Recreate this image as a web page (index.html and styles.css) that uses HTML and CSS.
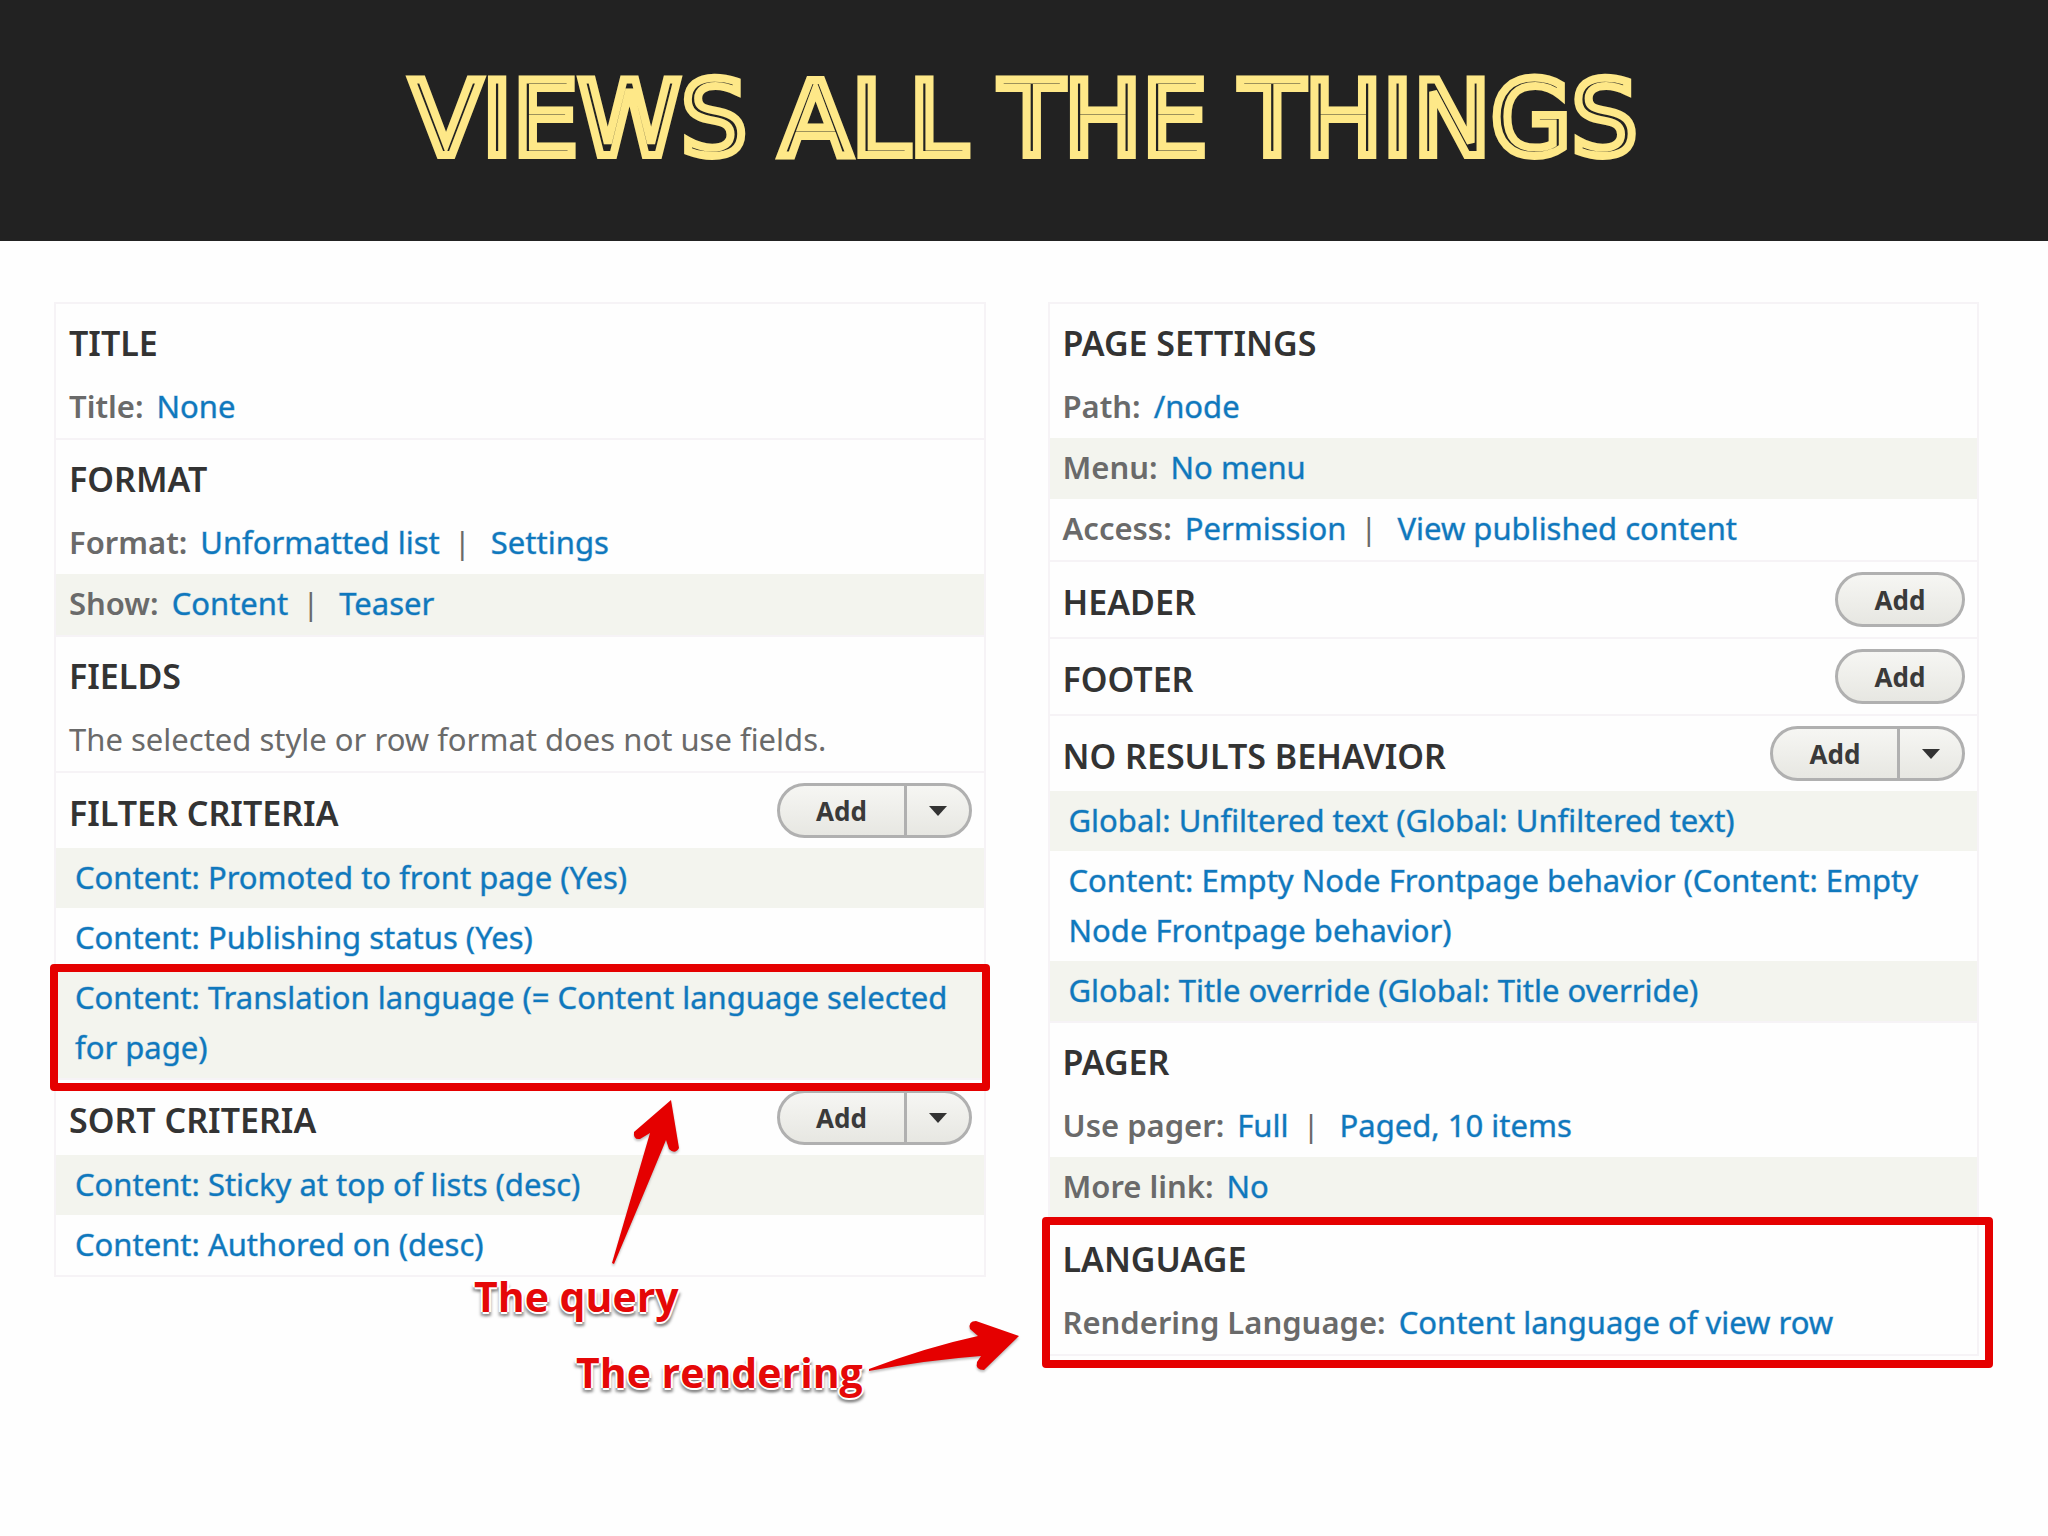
FILE: index.html
```html
<!DOCTYPE html>
<html lang="en">
<head>
<meta charset="utf-8">
<title>Views all the things</title>
<link rel="stylesheet" href="styles.css">
</head>
<body>
<header class="banner"><h1>VIEWS ALL THE THINGS</h1></header>
<main class="board">
  <div class="panel">
    <section class="bucket">
      <h2>TITLE</h2>
      <p class="row"><span class="label">Title:</span><a href="#">None</a></p>
    </section>
    <section class="bucket">
      <h2>FORMAT</h2>
      <p class="row"><span class="label">Format:</span><a href="#">Unformatted list</a><span class="bar">|</span><a href="#">Settings</a></p>
      <p class="row shaded"><span class="label">Show:</span><a href="#">Content</a><span class="bar">|</span><a href="#">Teaser</a></p>
    </section>
    <section class="bucket">
      <h2>FIELDS</h2>
      <p class="row">The selected style or row format does not use fields.</p>
    </section>
    <section class="bucket">
      <div class="head"><h2>FILTER CRITERIA</h2>
        <div class="actions"><button type="button">Add</button><button type="button" class="more" aria-label="More filter actions"><svg viewBox="0 0 18 10"><path d="M0 0h18L9 10z"/></svg></button></div>
      </div>
      <ul>
        <li class="shaded"><a href="#">Content: Promoted to front page (Yes)</a></li>
        <li><a href="#">Content: Publishing status (Yes)</a></li>
        <li class="shaded marked marked-query"><a href="#">Content: Translation language (= Content language selected for page)</a></li>
      </ul>
    </section>
    <section class="bucket">
      <div class="head"><h2>SORT CRITERIA</h2>
        <div class="actions"><button type="button">Add</button><button type="button" class="more" aria-label="More sort actions"><svg viewBox="0 0 18 10"><path d="M0 0h18L9 10z"/></svg></button></div>
      </div>
      <ul>
        <li class="shaded"><a href="#">Content: Sticky at top of lists (desc)</a></li>
        <li><a href="#">Content: Authored on (desc)</a></li>
      </ul>
    </section>
  </div>
  <div class="panel">
    <section class="bucket">
      <h2>PAGE SETTINGS</h2>
      <p class="row"><span class="label">Path:</span><a href="#">/node</a></p>
      <p class="row shaded"><span class="label">Menu:</span><a href="#">No menu</a></p>
      <p class="row"><span class="label">Access:</span><a href="#">Permission</a><span class="bar">|</span><a href="#">View published content</a></p>
    </section>
    <section class="bucket">
      <div class="head"><h2>HEADER</h2><div class="actions"><button type="button">Add</button></div></div>
    </section>
    <section class="bucket">
      <div class="head"><h2>FOOTER</h2><div class="actions"><button type="button">Add</button></div></div>
    </section>
    <section class="bucket">
      <div class="head"><h2>NO RESULTS BEHAVIOR</h2>
        <div class="actions"><button type="button">Add</button><button type="button" class="more" aria-label="More no results actions"><svg viewBox="0 0 18 10"><path d="M0 0h18L9 10z"/></svg></button></div>
      </div>
      <ul>
        <li class="shaded"><a href="#">Global: Unfiltered text (Global: Unfiltered text)</a></li>
        <li><a href="#">Content: Empty Node Frontpage behavior (Content: Empty Node Frontpage behavior)</a></li>
        <li class="shaded"><a href="#">Global: Title override (Global: Title override)</a></li>
      </ul>
    </section>
    <section class="bucket">
      <h2>PAGER</h2>
      <p class="row"><span class="label">Use pager:</span><a href="#">Full</a><span class="bar">|</span><a href="#">Paged, 10 items</a></p>
      <p class="row shaded"><span class="label">More link:</span><a href="#">No</a></p>
    </section>
    <section class="bucket marked marked-rendering">
      <h2>LANGUAGE</h2>
      <p class="row"><span class="label">Rendering Language:</span><a href="#">Content language of view row</a></p>
    </section>
  </div>
  <svg class="arrow arrow-query" viewBox="0 0 70 168" aria-hidden="true"><path d="M2 165L40 35L30 41Q23 42 24 34L61 2L69 50Q65 57 59 51L56 42Q38 86 4 166Z"/></svg>
  <svg class="arrow arrow-rendering" viewBox="0 0 154 56" aria-hidden="true"><path d="M2 53Q60 31 111 20L103 13Q101 5 109 5L152 20L117 54Q108 54 110 46L114 40Q60 44 2 55Z"/></svg>
  <p class="note note-query">The query</p>
  <p class="note note-rendering">The rendering</p>
</main>
</body>
</html>
```
FILE: styles.css
```css
* { box-sizing: border-box; }
body {
  margin: 0;
  background: #fefefe;
  color: #6a6a6a;
  font: 31px/50px "Noto Sans", "Open Sans", sans-serif;
}
h1, h2, p, ul { margin: 0; padding: 0; }
ul { list-style: none; }
/* A hairline outline gives the links a slightly heavier colour. */
a { color: #0f78bd; text-decoration: none; -webkit-text-stroke: 1px rgba(15, 120, 189, 0.4); }

.banner {
  display: flex;
  align-items: center;
  justify-content: center;
  height: 241px;
  padding-bottom: 4px;
  background: #222;
}
/* The outline covers all but the core of each stroke, leaving a dark inline. */
.banner h1 {
  color: #222;
  font: 400 104px/120px "DejaVu Sans", sans-serif;
  -webkit-text-stroke: 8px #fee888;
}

.board {
  position: relative;
  display: grid;
  grid-template-columns: 1fr 1fr;
  align-items: start;
  gap: 62px;
  padding: 61px 69px 160px 54px;
}
.panel { border: 2px solid #f6f3f6; border-bottom: 0; }
.bucket { border-bottom: 2px solid #f6f3f6; }
h2 {
  padding: 6px 13px 0;
  color: #333;
  font-size: 34px;
  font-weight: 650;
  line-height: 67px;
}
.head { display: flex; align-items: center; justify-content: space-between; height: 75px; padding-right: 12px; }
.row { padding: 4px 13px 7px; }
.label { margin-right: 13px; font-weight: 600; }
.bar { margin: 0 20px 0 14px; }
li { padding: 4px 19px 6px; }
.shaded { background: #f3f4ee; }

.actions {
  display: flex;
  height: 55px;
  border: 3px solid #b0b0b0;
  border-radius: 28px;
  background: linear-gradient(#f6f6f3, #e7e7e2);
}
button {
  width: 124px;
  padding: 0;
  border: 0;
  background: none;
  color: #3a3a3a;
  font: 700 26px/40px "Noto Sans", sans-serif;
}
.more { width: 65px; border-left: 3px solid #b0b0b0; }
.more svg { display: block; width: 18px; height: 10px; margin: 0 auto; fill: #333; }

.marked { position: relative; }
.marked::after {
  content: "";
  position: absolute;
  border: 8px solid #e50000;
  border-radius: 4px;
  pointer-events: none;
}
.marked-query::after { inset: -4px -6px -13px -6px; }
.marked-rendering::after { inset: -3px -16px -14px -8px; }

.note {
  position: absolute;
  color: #e50808;
  font: 700 41px/56px "Open Sans", "Noto Sans", sans-serif;
  text-shadow: 2px 0 #fff, -2px 0 #fff, 0 2px #fff, 0 -2px #fff, 2px 4px 3px #888, -2px 4px 3px #999;
}
.note-query { left: 474px; top: 1027px; }
.note-rendering { left: 576px; top: 1103px; }
.arrow { position: absolute; fill: #e50000; filter: drop-shadow(0 2px 1px #bbb); }
.arrow-query { left: 610px; top: 857px; width: 70px; height: 168px; }
.arrow-rendering { left: 867px; top: 1075px; width: 154px; height: 56px; }
```
